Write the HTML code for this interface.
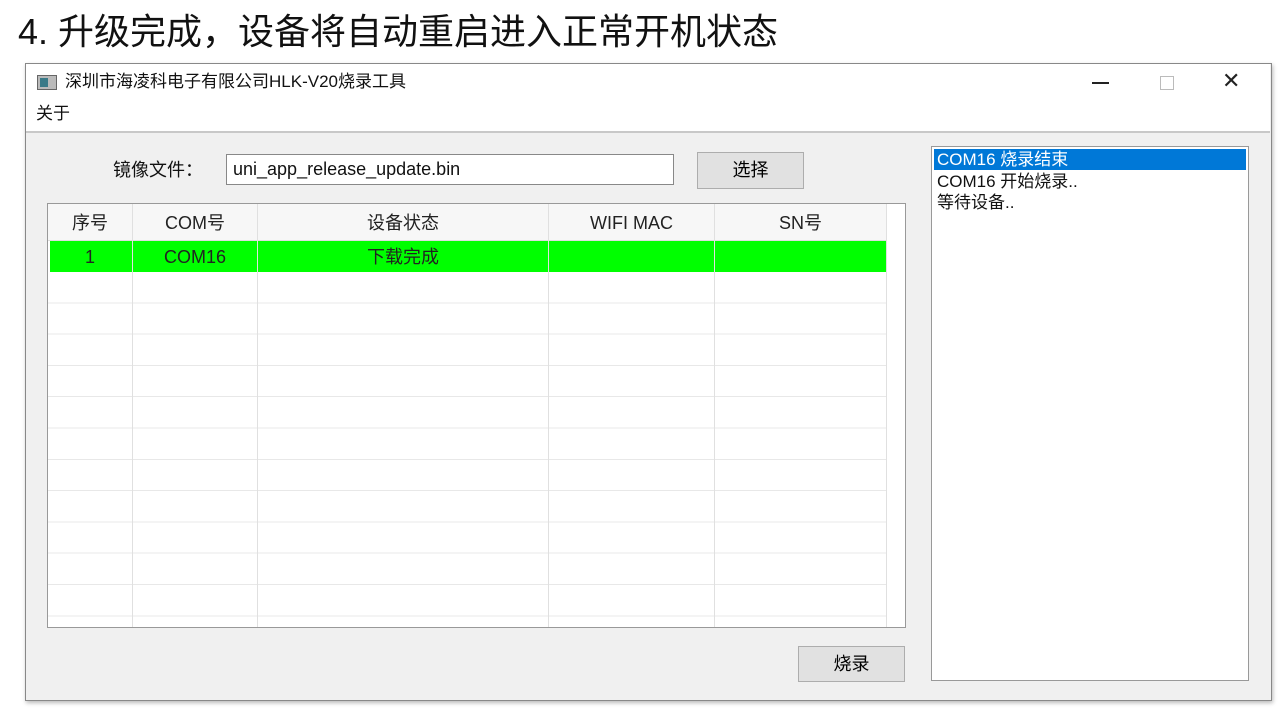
<!DOCTYPE html><html><head><meta charset="utf-8"><style>
body{margin:0;width:1280px;height:709px;background:#fff;position:relative;overflow:hidden;font-family:"Liberation Sans","Noto Sans CJK SC",sans-serif;}
.a{position:absolute}
.cell{position:absolute;text-align:center;font-size:18px;color:#222;height:30px;line-height:30px}
.v{position:absolute;top:0;width:1px;height:423px;background:#e0e0e0}
</style></head><body>
<div class="a" style="left:18px;top:10px;font-size:36px;line-height:44px;color:#111;">4. 升级完成，设备将自动重启进入正常开机状态</div>
<div class="a" style="left:25px;top:63px;width:1245px;height:636px;border:1px solid #888;background:#f0f0f0;box-shadow:1px 2px 4px #bbb"></div>
<div class="a" style="left:26px;top:64px;width:1244px;height:67px;background:#fff;border-bottom:2px solid #c8c8c8"></div>
<div class="a" style="left:37px;top:75px;width:18px;height:13px;background:#bbb;border:1px solid #666"><div class="a" style="left:2px;top:2px;width:8px;height:9px;background:#3a7a88"></div></div>
<div class="a" style="left:65px;top:70px;font-size:17px;line-height:24px;color:#111">深圳市海凌科电子有限公司HLK-V20烧录工具</div>
<div class="a" style="left:36px;top:102px;font-size:17px;line-height:24px;color:#111">关于</div>
<div class="a" style="left:1092px;top:82px;width:17px;height:2px;background:#222"></div>
<div class="a" style="left:1160px;top:76px;width:12px;height:12px;border:1px solid #bbb"></div>
<div class="a" style="left:1222px;top:68px;font-size:22px;color:#222">✕</div>
<div class="a" style="left:113px;top:156px;font-size:18px;line-height:28px;color:#111">镜像文件：</div>
<div class="a" style="left:226px;top:154px;width:446px;height:29px;background:#fff;border:1px solid #888"><div style="padding:0 0 0 6px;font-size:18px;line-height:29px;color:#111">uni_app_release_update.bin</div></div>
<div class="a" style="left:697px;top:152px;width:105px;height:35px;background:#e1e1e1;border:1px solid #adadad;text-align:center;line-height:35px;font-size:18px">选择</div>
<div class="a" style="left:47px;top:203px;width:857px;height:423px;background:#fff;border:1px solid #999;overflow:hidden">
<div class="a" style="left:0;top:0;width:838px;height:36px;background:#f7f7f7;border-bottom:1px solid #ddd"></div>
<div class="a" style="left:0;top:68px;width:838px;height:355px;background:repeating-linear-gradient(#fff 0 30.3px,#e8e8e8 30.3px 31.3px)"></div>
<div class="a" style="left:2px;top:37px;width:836px;height:31px;background:#00ff00"></div>
<div class="v" style="left:838px"></div>
<div class="v" style="left:84px"></div>
<div class="v" style="left:209px"></div>
<div class="v" style="left:500px"></div>
<div class="v" style="left:666px"></div>
<div class="cell" style="left:0;width:84px;top:4px">序号</div>
<div class="cell" style="left:85px;width:124px;top:4px">COM号</div>
<div class="cell" style="left:210px;width:290px;top:4px">设备状态</div>
<div class="cell" style="left:501px;width:165px;top:4px">WIFI MAC</div>
<div class="cell" style="left:667px;width:171px;top:4px">SN号</div>
<div class="cell" style="left:0;width:84px;top:38px">1</div>
<div class="cell" style="left:85px;width:124px;top:38px">COM16</div>
<div class="cell" style="left:210px;width:290px;top:38px">下载完成</div>
</div>
<div class="a" style="left:931px;top:146px;width:316px;height:533px;background:#fff;border:1px solid #999"></div>
<div class="a" style="left:934px;top:149px;width:312px;height:21px;background:#0078d7"></div>
<div class="a" style="left:937px;top:149px;font-size:17px;color:#fff;line-height:21px">COM16 烧录结束</div>
<div class="a" style="left:937px;top:171px;font-size:17px;color:#111;line-height:21px">COM16 开始烧录..</div>
<div class="a" style="left:937px;top:192px;font-size:17px;color:#111;line-height:21px">等待设备..</div>
<div class="a" style="left:798px;top:646px;width:105px;height:34px;background:#e1e1e1;border:1px solid #adadad;text-align:center;line-height:34px;font-size:18px">烧录</div>
</body></html>
